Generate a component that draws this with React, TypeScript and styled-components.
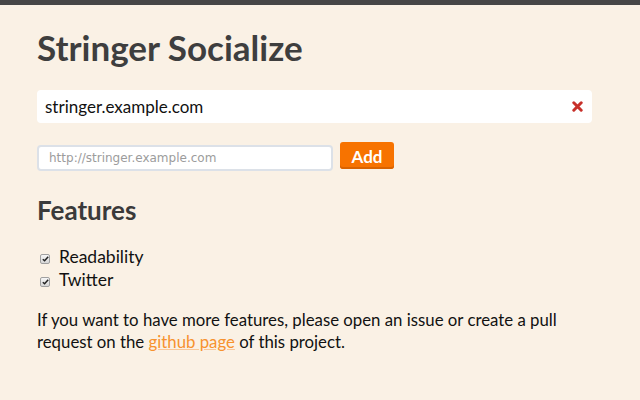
import React from "react";
import styled, { createGlobalStyle } from "styled-components";

const Global = createGlobalStyle`
  html, body { margin: 0; padding: 0; background: #faf1e5; }
  body { font-family: Lato, "Open Sans", sans-serif; color: #111; }
`;

const TopBar = styled.div`
  height: 5px;
  background: #464646;
`;

const Page = styled.main`
  width: 555px;
  padding: 22px 0 0 37px;
`;

const Title = styled.h1`
  margin: 0;
  font-size: 35px;
  font-weight: 700;
  color: #3e3e3e;
  line-height: 40px;
`;

const ItemRow = styled.div`
  margin-top: 23px;
  height: 33px;
  background: #fff;
  border-radius: 4px;
  display: flex;
  align-items: center;
  justify-content: space-between;
  padding: 0 9px 0 8px;
  font-size: 17px;
  color: #111;
`;

const Remove = styled.span`
  display: flex;
  align-items: center;
`;

const AddForm = styled.div`
  margin-top: 19px;
  display: flex;
  align-items: flex-start;
  gap: 7px;
`;

const UrlInput = styled.input`
  box-sizing: border-box;
  margin-top: 3px;
  width: 296px;
  height: 26px;
  border: 2px solid #dce1e8;
  border-radius: 4px;
  background: #fff;
  padding: 0 10px;
  font-family: "DejaVu Sans", Lato, sans-serif;
  font-size: 12px;
  color: #333;
  outline: none;
  &::placeholder { color: #9c9c9c; }
`;

const AddButton = styled.button`
  box-sizing: border-box;
  height: 27px;
  width: 54px;
  border: none;
  border-radius: 3px;
  background: #f77300;
  box-shadow: inset 0 -2px 0 #d96300;
  color: #fff;
  font-family: Lato, sans-serif;
  font-weight: 700;
  font-size: 17px;
  line-height: 20px;
  padding: 3px 0 0;
`;

const Heading = styled.h2`
  margin: 24px 0 0;
  font-size: 26px;
  font-weight: 700;
  color: #3a3a3a;
  line-height: 30px;
`;

const FeatureList = styled.div`
  margin-top: 20px;
  display: flex;
  flex-direction: column;
`;

const Feature = styled.label`
  display: flex;
  align-items: flex-start;
  gap: 9px;
  font-size: 17.5px;
  line-height: 23px;
  color: #111;
`;

const Box = styled.span`
  box-sizing: border-box;
  width: 10px;
  height: 10px;
  margin-left: 3px;
  margin-top: 9px;
  border: 1px solid #a0a0a0;
  border-radius: 2px;
  background: linear-gradient(#f6f6f6, #d6d6d6);
  display: flex;
  align-items: center;
  justify-content: center;
`;

const Note = styled.p`
  margin: 18px 0 0;
  font-size: 16.8px;
  line-height: 22px;
  color: #111;
`;

const Link = styled.a`
  color: #f7922e;
  text-decoration: underline;
  text-decoration-color: #f9c89a;
`;

const Check = () => (
  <Box>
    <svg width="7" height="6" viewBox="0 0 7 6">
      <path d="M0.8 3.2 L2.6 4.8 L6.2 0.8" fill="none" stroke="#222" strokeWidth="1.5" />
    </svg>
  </Box>
);

export default function App() {
  return (
    <>
      <Global />
      <TopBar />
      <Page>
        <Title>Stringer Socialize</Title>
        <ItemRow>
          <span>stringer.example.com</span>
          <Remove>
            <svg width="11" height="11" viewBox="0 0 11 11">
              <path d="M1.8 1.8 L9.2 9.2 M9.2 1.8 L1.8 9.2" stroke="#c7302a" strokeWidth="3" strokeLinecap="round" />
            </svg>
          </Remove>
        </ItemRow>
        <AddForm>
          <UrlInput placeholder="http://stringer.example.com" />
          <AddButton>Add</AddButton>
        </AddForm>
        <Heading>Features</Heading>
        <FeatureList>
          <Feature><Check />Readability</Feature>
          <Feature><Check />Twitter</Feature>
        </FeatureList>
        <Note>
          If you want to have more features, please open an issue or create a pull request on the{" "}
          <Link href="#">github page</Link> of this project.
        </Note>
      </Page>
    </>
  );
}
